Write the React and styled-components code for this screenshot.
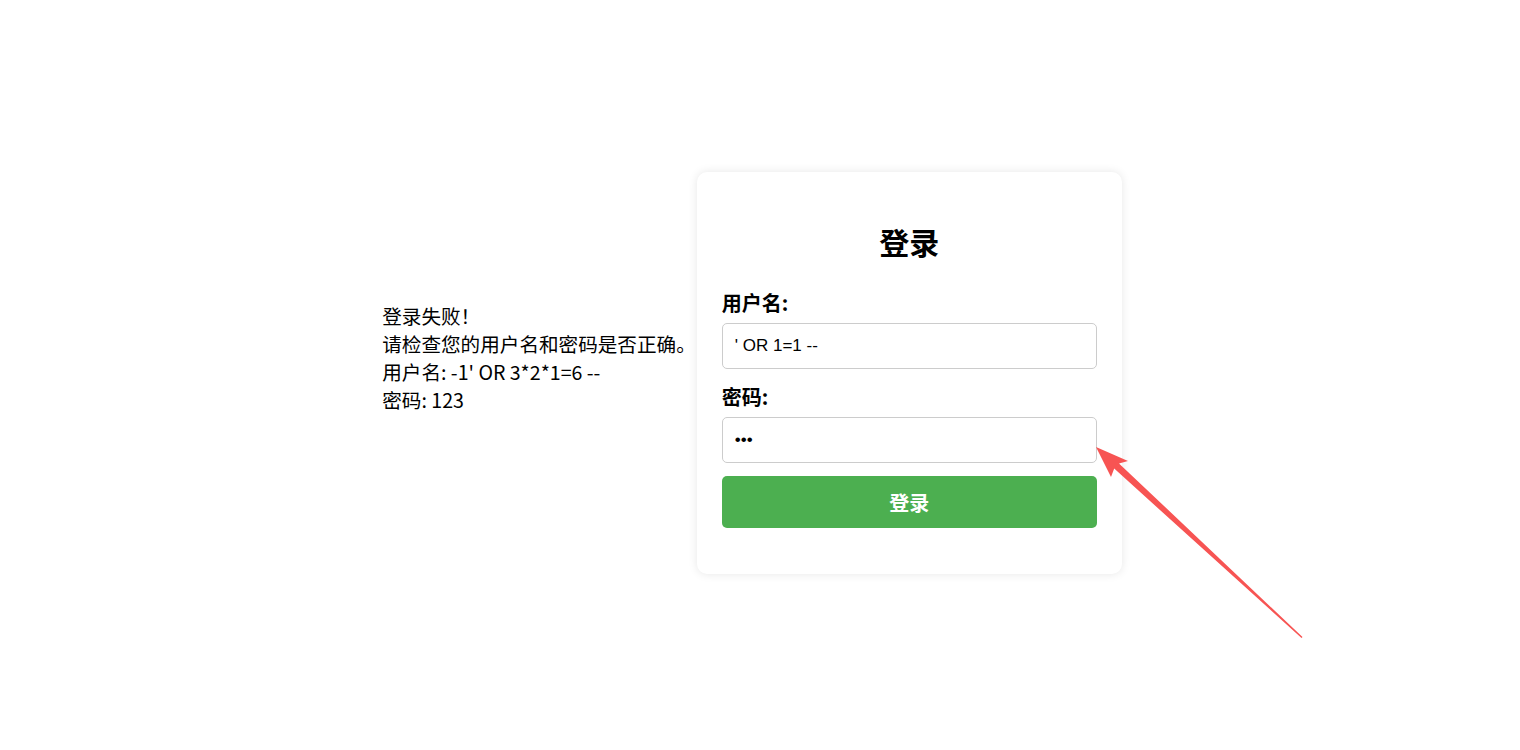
import styled, { createGlobalStyle } from 'styled-components';

const GlobalStyle = createGlobalStyle`
    html, body {
        margin: 0;
        padding: 0;
        background: #ffffff;
    }
    body {
        font-family: "Noto Sans CJK SC", "Noto Sans", sans-serif;
        color: #000000;
    }
`;

export default function App() {
    return (
        <>
            <GlobalStyle />
            <Page>
                <Message>
                    登录失败！<br />
                    请检查您的用户名和密码是否正确。<br />
                    用户名: -1' OR 3*2*1=6 --<br />
                    密码: 123<br />
                </Message>
                <LoginCard>
                    <Title>登录</Title>
                    <Label>用户名:</Label>
                    <TextInput type="text" defaultValue="' OR 1=1 --" readOnly />
                    <Label>密码:</Label>
                    <TextInput type="password" defaultValue="123" readOnly />
                    <SubmitButton type="button">登录</SubmitButton>
                </LoginCard>
            </Page>
            <Arrow viewBox="0 0 1520 750" width="1520" height="750">
                <polygon
                    points="1096,447 1128,461 1119,463.4 1302.5,637 1301.5,638 1114.2,468.6 1111,477"
                    fill="#f75453"
                />
            </Arrow>
        </>
    );
}

const Page = styled.div`
    display: flex;
    justify-content: center;
    align-items: center;
    gap: 1px;
    height: 100vh;
    padding: 0 16px 4px 0;
    box-sizing: border-box;
`;

const Message = styled.div`
    font-size: 19.6px;
    line-height: 28px;
    padding-bottom: 30px;
`;

const LoginCard = styled.div`
    display: flex;
    flex-direction: column;
    width: 425px;
    box-sizing: border-box;
    padding: 25px 25px 46px;
    background: #ffffff;
    border-radius: 10px;
    box-shadow: 0 0 10px rgba(0, 0, 0, 0.1);
`;

const Title = styled.h2`
    margin: 23px 0 28px;
    font-size: 30px;
    line-height: 42px;
    font-weight: 700;
    text-align: center;
`;

const Label = styled.label`
    font-size: 20px;
    line-height: 26px;
    font-weight: 700;
    margin-bottom: 7px;
`;

const TextInput = styled.input`
    height: 46px;
    box-sizing: border-box;
    padding: 0 12px;
    margin-bottom: 15px;
    border: 1px solid #cccccc;
    border-radius: 5px;
    font-family: "Liberation Sans", Arial, sans-serif;
    font-size: 17px;
    color: #000000;
    outline: none;
`;

const SubmitButton = styled.button`
    height: 52px;
    margin-top: -2px;
    border: none;
    border-radius: 5px;
    background: #4caf50;
    color: #ffffff;
    font-family: "Noto Sans CJK SC", sans-serif;
    font-size: 20px;
    font-weight: 700;
    cursor: pointer;
`;

const Arrow = styled.svg`
    position: absolute;
    top: 0;
    left: 0;
    pointer-events: none;
`;
